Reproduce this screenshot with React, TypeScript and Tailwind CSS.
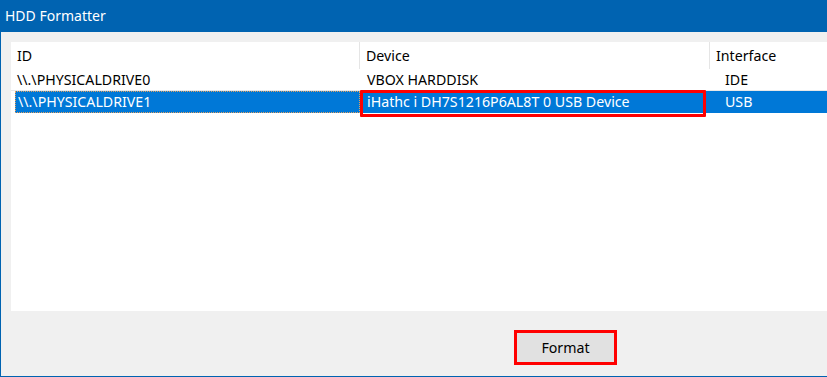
import React from "react";

const font = { fontFamily: '"Noto Sans", "Open Sans", sans-serif' };

export default function App() {
  return (
    <div
      className="w-[827px] h-[377px] overflow-hidden flex flex-col bg-[#f0f0f0] border-l border-b border-[#0063b1] text-black"
      style={font}
    >
      <div className="h-[32px] shrink-0 bg-[#0063b1] text-white text-[14px] flex items-center pl-[4px] pb-[1px]">
        HDD Formatter
      </div>
      <div className="flex-1 flex flex-col pl-[10px] pt-[10px]">
        <div className="relative h-[269px] bg-white text-[14.2px]">
          <div className="flex h-[27px] items-center">
            <div className="w-[349px] pl-[6px] h-full flex items-center border-r border-[#e5e5e5]">ID</div>
            <div className="w-[350px] pl-[6px] h-full flex items-center border-r border-[#e5e5e5]">Device</div>
            <div className="pl-[6px] h-full flex items-center">Interface</div>
          </div>
          <div className="flex h-[22px] items-center border-b border-[#e8e8e8]">
            <div className="w-[349px] pl-[6px]">\\.\PHYSICALDRIVE0</div>
            <div className="w-[350px] pl-[7px]">VBOX HARDDISK</div>
            <div className="pl-[15px]">IDE</div>
          </div>
          <div className="flex h-[22px] items-center ml-[4px] bg-[#0078d7] text-white">
            <div className="w-[345px] pl-[2px] h-full flex items-center border border-dotted border-[#e0a060]">\\.\PHYSICALDRIVE1</div>
            <div className="w-[350px] pl-[7px]">iHathc i DH7S1216P6AL8T 0 USB Device</div>
            <div className="pl-[15px]">USB</div>
          </div>
          <div className="absolute left-[349px] top-[48px] w-[346px] h-[27px] border-[3px] border-[#ff0000] rounded-[1px]" />
        </div>
        <div className="flex pl-[503px] pt-[19px]">
          <button className="w-[103px] h-[35px] bg-[#e1e1e1] border-[3px] border-[#ff0000] text-[14.2px] flex items-center justify-center">
            Format
          </button>
        </div>
      </div>
    </div>
  );
}
